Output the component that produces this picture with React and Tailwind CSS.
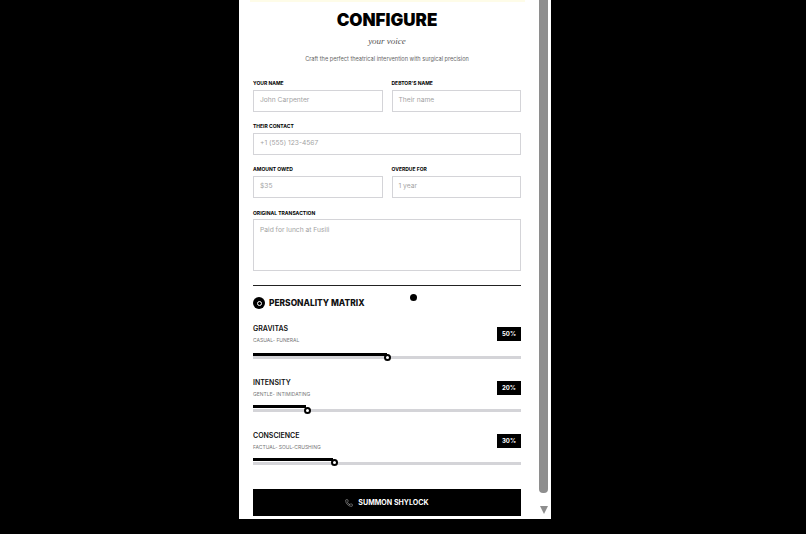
import React from 'react';
import { Phone } from 'lucide-react';

const inter = { fontFamily: 'Inter, sans-serif' };

const Field = ({ label, placeholder, tall }) => (
  <div className="flex-1 min-w-0">
    <div className="h-[7px] text-[5px] leading-[7px] font-bold text-black mb-[2.5px]">{label}</div>
    <div className={`border border-[#d4d4d8] pl-[6px] text-[6.7px] text-[#a3a3a3] ${tall ? 'h-[52px] pt-[5px]' : 'h-[22px] leading-[19px]'}`}>
      {placeholder}
    </div>
  </div>
);

const sliders = [
  { name: 'GRAVITAS', range: 'CASUAL- FUNERAL', pct: '50%', head: 'h-[28px]', track: 'top-[3px]', fill: 'w-[134px]', thumb: 'left-[130.5px] top-[0.5px]', mb: 'mb-[16px]' },
  { name: 'INTENSITY', range: 'GENTLE- INTIMIDATING', pct: '20%', head: 'h-[26px]', track: 'top-[4px]', fill: 'w-[53px]', thumb: 'left-[50.5px] top-[1.5px]', mb: 'mb-[17px]' },
  { name: 'CONSCIENCE', range: 'FACTUAL- SOUL-CRUSHING', pct: '30%', head: 'h-[26px]', track: 'top-[3.5px]', fill: 'w-[80px]', thumb: 'left-[77.5px] top-[1.2px]', mb: 'mb-[23.4px]' },
];

const Slider = ({ item }) => (
  <div className={item.mb}>
    <div className={`flex justify-between ${item.head}`}>
      <div>
        <div className="text-[7px] leading-[10px] font-semibold text-[#111] mt-[1px]">{item.name}</div>
        <div className="text-[5px] leading-[6px] text-[#777] mt-[3px]">{item.range}</div>
      </div>
      <div className="w-[24px] h-[14px] mt-[4px] bg-black text-white text-[6px] font-bold leading-[13px] text-center">{item.pct}</div>
    </div>
    <div className="relative h-[8px] mt-[2px]">
      <div className={`absolute left-0 right-0 h-[3px] bg-[#d4d4d8] ${item.track}`} />
      <div className={`absolute left-0 top-0 h-[3px] bg-black ${item.fill}`} />
      <div className={`absolute w-[7px] h-[7px] rounded-full bg-white border-2 border-black ${item.thumb}`} />
    </div>
  </div>
);

export default function App() {
  return (
    <div className="h-screen bg-black flex justify-center overflow-hidden pr-[16px]" style={inter}>
      <div className="w-[312px] h-[519px] bg-white flex overflow-hidden relative">
        <div className="w-[300px] shrink-0 pl-[14px] pr-[18px]">
          <div className="h-[2px] ml-[-3px] mr-[-4px] bg-[#fefce8]" />
          <h1 className="text-[17px] leading-[22px] font-black text-black text-center mt-[7px]">CONFIGURE</h1>
          <p className="text-[9px] leading-[12px] italic text-[#555] text-center mt-[4px]" style={{ fontFamily: '"Liberation Serif", serif' }}>your voice</p>
          <p className="text-[5.6px] leading-[8px] text-[#666] text-center mt-[8px]">Craft the perfect theatrical intervention with surgical precision</p>

          <div className="flex gap-[9px] mt-[17px]">
            <Field label="YOUR NAME" placeholder="John Carpenter" />
            <Field label="DEBTOR'S NAME" placeholder="Their name" />
          </div>
          <div className="mt-[11.7px]"><Field label="THEIR CONTACT" placeholder="+1 (555) 123-4567" /></div>
          <div className="flex gap-[9px] mt-[11.7px]">
            <Field label="AMOUNT OWED" placeholder="$35" />
            <Field label="OVERDUE FOR" placeholder="1 year" />
          </div>
          <div className="mt-[11.7px]"><Field label="ORIGINAL TRANSACTION" placeholder="Paid for lunch at Fusili" tall /></div>

          <div className="border-t border-[#222] mt-[14px] pt-[11px] flex items-center gap-[4px]">
            <div className="w-[12px] h-[12px] rounded-full bg-black flex items-center justify-center">
              <div className="w-[5px] h-[5px] rounded-full border border-white" />
            </div>
            <h2 className="text-[8.4px] leading-[12px] font-extrabold text-[#111]">PERSONALITY MATRIX</h2>
          </div>

          <div className="mt-[14px]">
            {sliders.map((s) => <Slider key={s.name} item={s} />)}
          </div>

          <button className="w-full h-[27px] bg-black text-white flex items-center justify-center gap-[5px] text-[7.1px] font-bold">
            <Phone size={8} strokeWidth={1.5} className="text-[#ccc] mt-[1px]" />
            SUMMON SHYLOCK
          </button>
        </div>

        {/* scrollbar */}
        <div className="w-[9px] flex flex-col items-center">
          <div className="w-[9px] h-[493px] shrink-0 bg-[#8e8e8e] rounded-b-[4px]" />
          <div className="mt-[13px] w-0 h-0 border-l-[4.5px] border-r-[4.5px] border-t-[8px] border-l-transparent border-r-transparent border-t-[#8e8e8e]" />
        </div>

        {/* stray cursor dot */}
        <div className="absolute left-[171px] top-[294px] w-[7px] h-[7px] rounded-full bg-black" />
      </div>
    </div>
  );
}
